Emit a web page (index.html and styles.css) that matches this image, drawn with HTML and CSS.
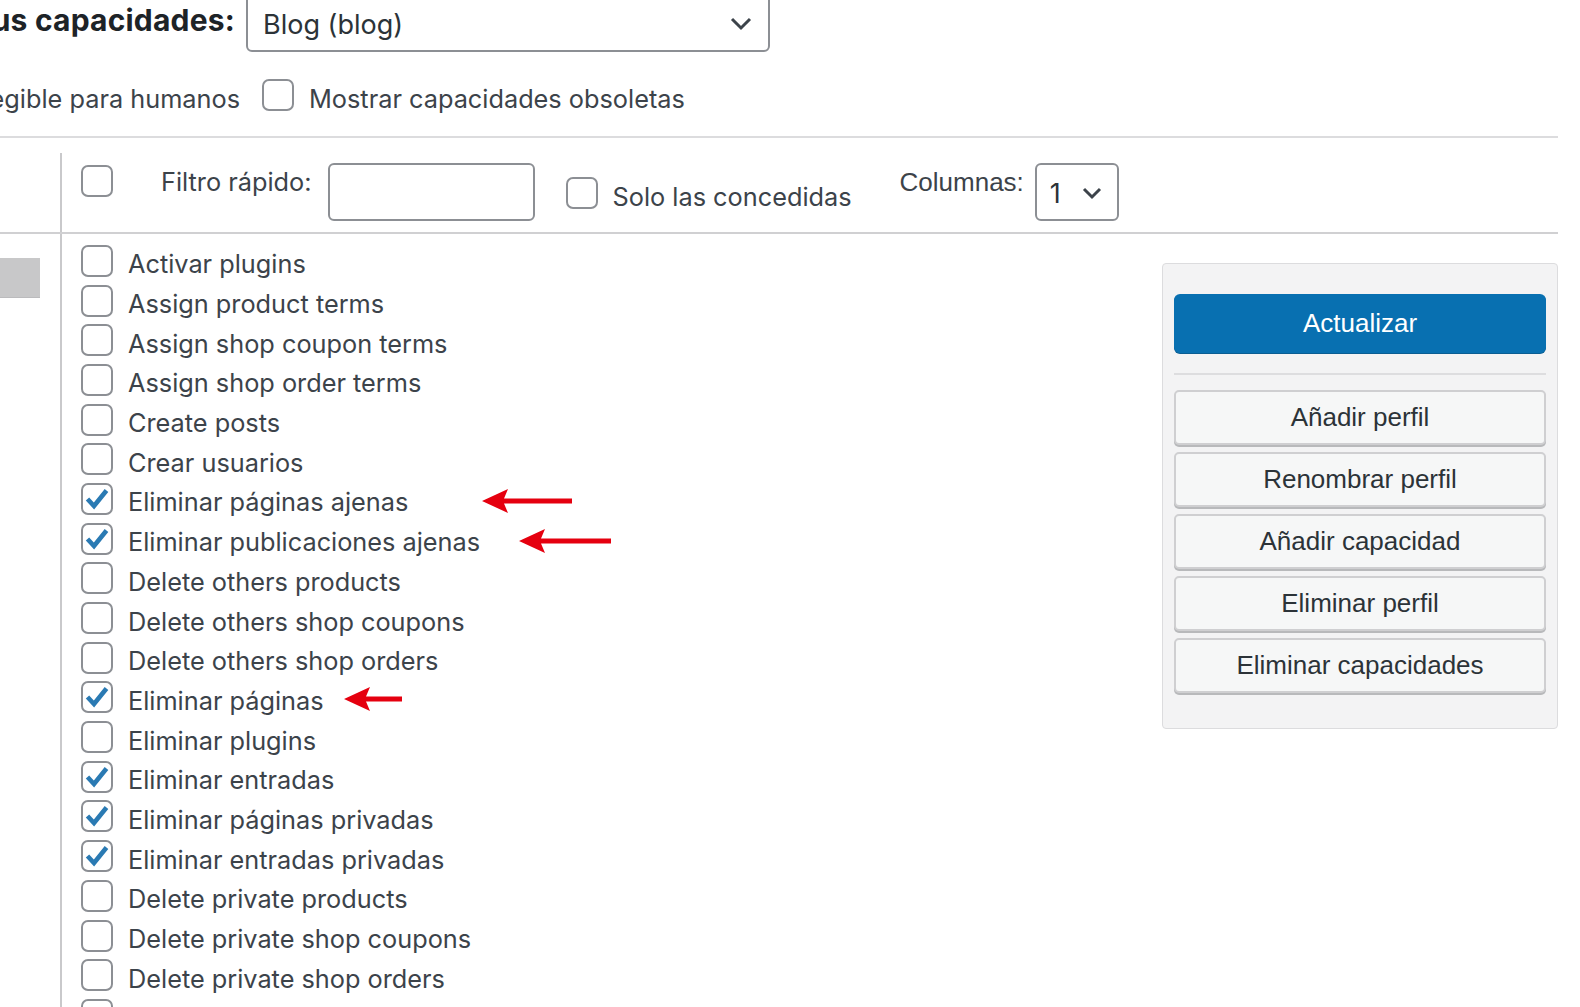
FILE: index.html
```html
<!DOCTYPE html>
<html lang="es">
<head>
  <meta charset="UTF-8" />
  <meta name="viewport" content="width=device-width, initial-scale=1.0"/>
  <title>Editor de perfiles</title>
  <link rel="stylesheet" href="styles.css">
</head>
<body>
  <div class="page">
    <div class="role-row">
      <div class="clip-label role-label"><span>Seleccionar perfil y cambiar sus capacidades:</span></div>
      <div class="select role-select">
        <span>Blog (blog)</span>
        <svg class="chevron" width="22" height="14" viewBox="0 0 22 14"><path d="M2 2 L11 11 L20 2" fill="none" stroke="#3c434a" stroke-width="3"/></svg>
      </div>
    </div>

    <div class="options-row">
      <div class="clip-label opt-label"><span>Mostrar capacidades en forma legible para humanos</span></div>
      <span class="cb"></span>
      <span class="opt-text">Mostrar capacidades obsoletas</span>
    </div>

    <div class="rule"></div>

    <div class="editor-head">
      <div class="side"></div>
      <div class="toolbar">
        <span class="cb tb-all"></span>
        <span class="tb-label">Filtro rápido:</span>
        <span class="tb-input"></span>
        <span class="cb tb-granted"></span>
        <span class="tb-granted-text">Solo las concedidas</span>
        <span class="tb-cols">Columnas:</span>
        <div class="select cols-select">
          <span>1</span>
          <svg class="chevron" width="20" height="13" viewBox="0 0 20 13"><path d="M2 2 L10 10 L18 2" fill="none" stroke="#3c434a" stroke-width="3"/></svg>
        </div>
      </div>
    </div>

    <div class="editor-body">
      <div class="side">
        <div class="group-tab"></div>
      </div>
      <div class="caps-area">
        <ul class="caps" id="caps"></ul>

        <div class="actions">
          <button class="btn primary">Actualizar</button>
          <div class="actions-sep"></div>
          <button class="btn">Añadir perfil</button>
          <button class="btn">Renombrar perfil</button>
          <button class="btn">Añadir capacidad</button>
          <button class="btn">Eliminar perfil</button>
          <button class="btn">Eliminar capacidades</button>
        </div>
      </div>
    </div>
  </div>

  <script>
    const caps = [
      ['Activar plugins', 0],
      ['Assign product terms', 0],
      ['Assign shop coupon terms', 0],
      ['Assign shop order terms', 0],
      ['Create posts', 0],
      ['Crear usuarios', 0],
      ['Eliminar páginas ajenas', 1, 'arrow-a', 90],
      ['Eliminar publicaciones ajenas', 1, 'arrow-b', 92],
      ['Delete others products', 0],
      ['Delete others shop coupons', 0],
      ['Delete others shop orders', 0],
      ['Eliminar páginas', 1, 'arrow-c', 58],
      ['Eliminar plugins', 0],
      ['Eliminar entradas', 1],
      ['Eliminar páginas privadas', 1],
      ['Eliminar entradas privadas', 1],
      ['Delete private products', 0],
      ['Delete private shop coupons', 0],
      ['Delete private shop orders', 0],
      ['Delete product', 0],
      ['Delete product terms', 0]
    ];

    const check = '<svg width="26" height="24" viewBox="0 0 26 24"><path d="M3.5 12 L10 19 L22.5 3.5" fill="none" stroke="#2a7ab3" stroke-width="4.6"/></svg>';

    function arrow(len) {
      return `<svg width="${len}" height="26" viewBox="0 0 ${len} 26"><path d="M0 13 L26 1 L22 10.5 L${len} 10.5 L${len} 15.5 L22 15.5 L26 25 Z" fill="#e5000f"/></svg>`;
    }

    const list = document.getElementById('caps');
    caps.forEach(([name, on, mark, len]) => {
      const li = document.createElement('li');
      li.innerHTML = `
        <span class="cb">${on ? check : ''}</span>
        <span class="cap-name">${name}</span>
        ${mark ? `<span class="arrow ${mark}">${arrow(len)}</span>` : ''}
      `;
      list.appendChild(li);
    });
  </script>
</body>
</html>
```

FILE: styles.css
```css
body {
  margin: 0;
  background: #fff;
  color: #3c434a;
  font-family: Inter, 'Noto Sans', sans-serif;
  overflow: hidden;
  height: 1007px;
}

.page {
  width: 1558px;
  margin-top: -6px;
}

.clip-label {
  display: flex;
  justify-content: flex-end;
  overflow: hidden;
  white-space: nowrap;
}

/* role select row */
.role-row {
  display: flex;
  align-items: center;
  height: 58px;
}

.role-label {
  width: 235px;
  font-size: 30px;
  font-weight: 700;
  color: #1d2327;
  letter-spacing: 0.2px;
  padding-bottom: 6px;
}

.select {
  box-sizing: border-box;
  display: flex;
  align-items: center;
  justify-content: space-between;
  border: 2px solid #8c8f94;
  border-radius: 6px;
  background: #fff;
  color: #2c3338;
  font-size: 27px;
}

.role-select {
  width: 524px;
  height: 58px;
  margin-left: 11px;
  padding: 2px 16px 0 15px;
}

.cols-select {
  width: 84px;
  height: 58px;
  margin-left: 11px;
  padding: 2px 15px 0 13px;
}

.chevron {
  display: block;
}

/* display options */
.options-row {
  display: flex;
  align-items: center;
  margin-top: 26px;
  height: 34px;
  font-size: 25.3px;
}

.opt-label {
  width: 240px;
  padding-top: 6px;
}

.options-row .cb {
  margin-left: 22px;
}

.opt-text {
  margin-left: 15px;
  padding-top: 6px;
}

.rule {
  height: 2px;
  background: #dcdcde;
  margin-top: 24px;
}

/* checkbox */
.cb {
  box-sizing: border-box;
  flex: none;
  display: flex;
  align-items: center;
  justify-content: center;
  width: 32px;
  height: 32px;
  border: 2px solid #8c8f94;
  border-radius: 7px;
  background: #fff;
}

.cb svg {
  display: block;
}

/* editor */
.editor-head,
.editor-body {
  display: flex;
}

.side {
  width: 60px;
  flex: none;
}

.editor-head {
  margin-top: 15px;
  border-bottom: 2px solid #d0d0d2;
}

.toolbar {
  flex: 1;
  display: flex;
  align-items: flex-start;
  height: 69px;
  padding: 10px 0 0 19px;
  border-left: 2px solid #c9c9cb;
  font-size: 25.3px;
}

.tb-all {
  margin-top: 2px;
}

.tb-label {
  margin-left: 48px;
  line-height: 38px;
}

.tb-input {
  box-sizing: border-box;
  width: 207px;
  height: 58px;
  margin-left: 16px;
  border: 2px solid #8c8f94;
  border-radius: 6px;
}

.tb-granted {
  margin-left: 31px;
  margin-top: 14px;
}

.tb-granted-text {
  margin-left: 15px;
  margin-top: 14px;
  line-height: 40px;
}

.tb-cols {
  margin-left: 48px;
  line-height: 38px;
  font-family: 'Liberation Sans', Arial, sans-serif;
  font-size: 26px;
}

.editor-body .side {
  padding-top: 24px;
}

.group-tab {
  width: 40px;
  height: 39px;
  background: #c8c8c9;
  border-bottom: 1px solid #bbbbbd;
}

.caps-area {
  flex: 1;
  display: flex;
  justify-content: space-between;
  align-items: flex-start;
  border-left: 2px solid #c9c9cb;
  min-height: 800px;
}

.caps {
  list-style: none;
  margin: 0;
  padding: 7px 0 0 19px;
}

.caps li {
  display: flex;
  align-items: center;
  height: 39.7px;
  font-size: 25.3px;
}

.cap-name {
  margin-left: 15px;
  padding-top: 6px;
}

.arrow {
  display: block;
  padding-top: 4px;
}

.arrow svg {
  display: block;
}

.arrow-a { margin-left: 74px; }
.arrow-b { margin-left: 39px; }
.arrow-c { margin-left: 20px; }

/* action panel */
.actions {
  box-sizing: border-box;
  display: flex;
  flex-direction: column;
  gap: 7px;
  width: 396px;
  margin-top: 29px;
  padding: 30px 11px 35px;
  background: #f3f3f4;
  border: 1px solid #dcdcde;
  border-radius: 4px;
}

.btn {
  box-sizing: border-box;
  height: 55px;
  border: 2px solid #cfcfd1;
  border-radius: 5px;
  background: #f6f7f7;
  box-shadow: 0 2px 0 #b8b9bb;
  color: #2c3338;
  font-family: 'Liberation Sans', Arial, sans-serif;
  font-size: 26px;
  cursor: pointer;
}

.btn.primary {
  height: 59px;
  border: none;
  border-radius: 6px;
  background: #0870b1;
  box-shadow: 0 1px 0 #0a5d92;
  color: #fff;
}

.actions-sep {
  height: 2px;
  background: #dddddf;
  margin: 13px 0 8px;
}
```
